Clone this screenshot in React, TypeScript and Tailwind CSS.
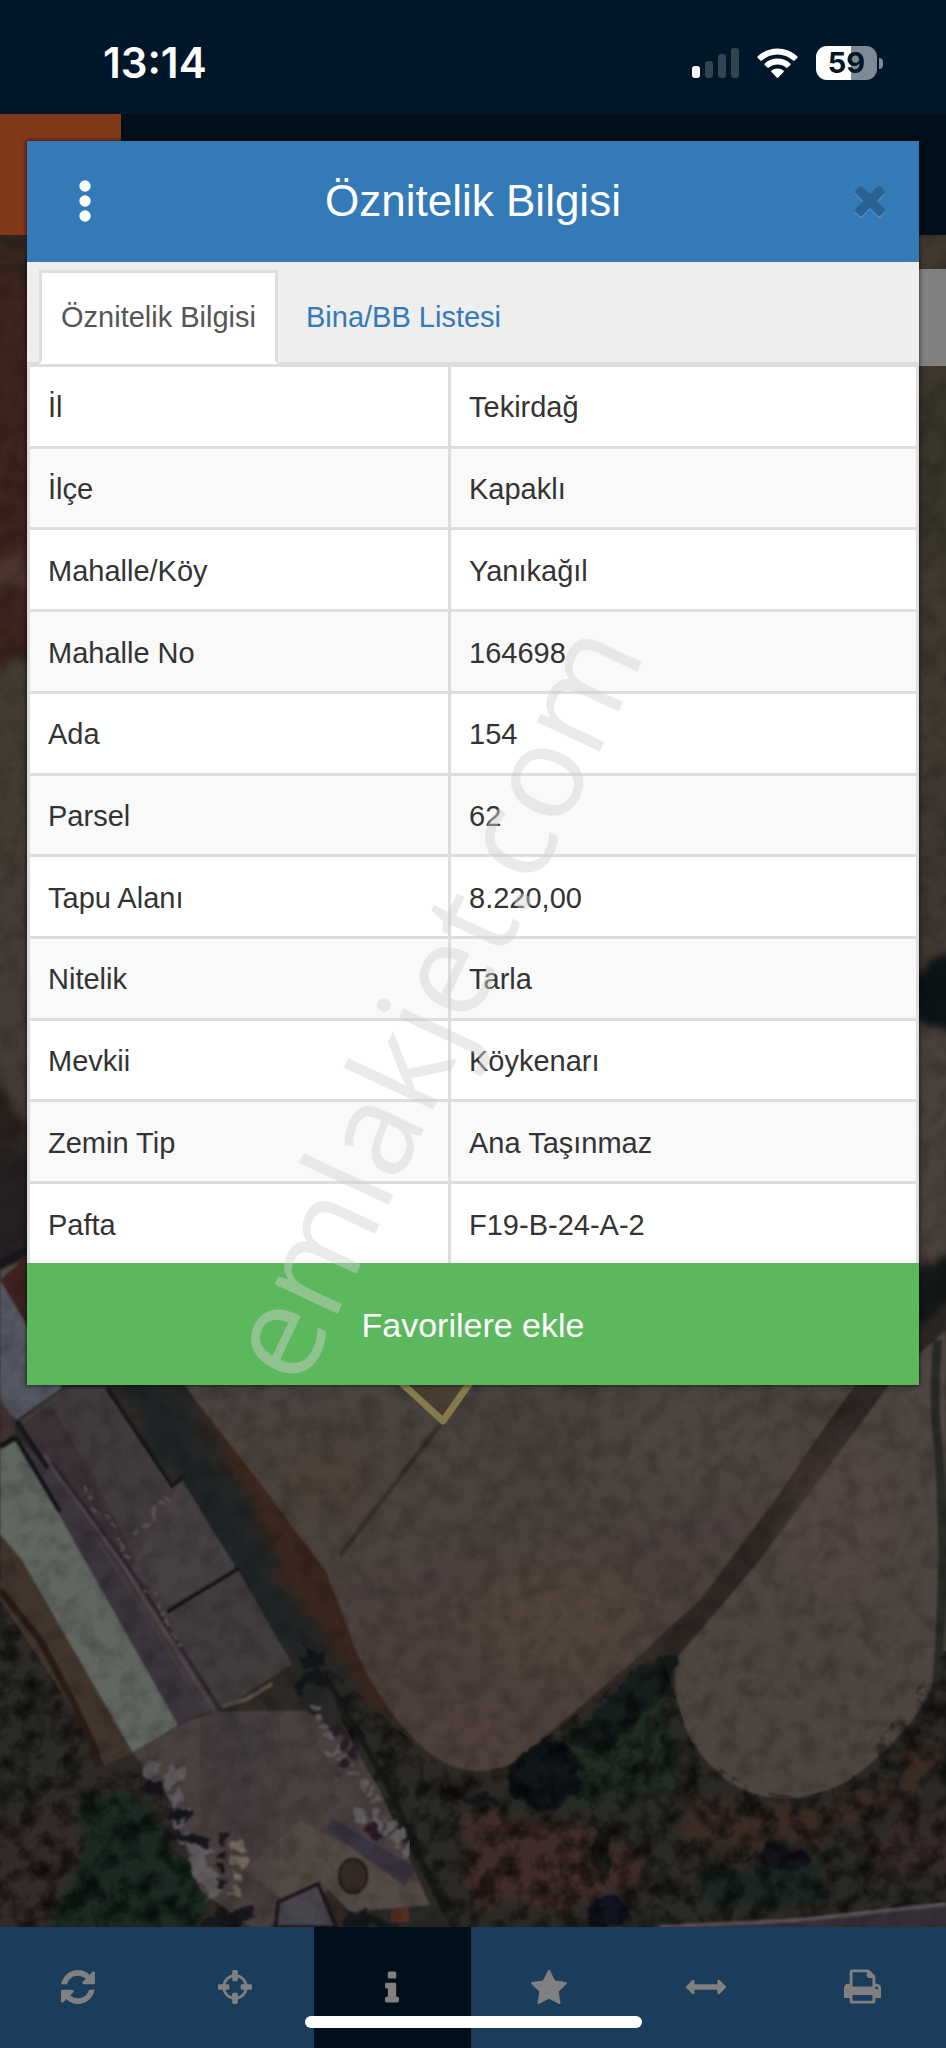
import {useState} from "react"

const rows = [
    {label: "İl", value: "Tekirdağ"},
    {label: "İlçe", value: "Kapaklı"},
    {label: "Mahalle/Köy", value: "Yanıkağıl"},
    {label: "Mahalle No", value: "164698"},
    {label: "Ada", value: "154"},
    {label: "Parsel", value: "62"},
    {label: "Tapu Alanı", value: "8.220,00"},
    {label: "Nitelik", value: "Tarla"},
    {label: "Mevkii", value: "Köykenarı"},
    {label: "Zemin Tip", value: "Ana Taşınmaz"},
    {label: "Pafta", value: "F19-B-24-A-2"},
]

const tools = [
    {
        name: "Yenile",
        viewBox: "0 128 1536 1536",
        size: "w-[34px] h-[34px]",
        path: "M1511 1056q0 5-1 7-64 268-268 434.500t-478 166.500q-146 0-282.500-55t-243.500-157l-129 129q-19 19-45 19t-45-19-19-45v-448q0-26 19-45t45-19h448q26 0 45 19t19 45-19 45l-137 137q71 66 161 102t187 36q134 0 250-65t186-179q11-17 53-117 8-23 30-23h192q13 0 22.500 9.500t9.500 22.500zM1536 256v448q0 26-19 45t-45 19h-448q-26 0-45-19t-19-45 19-45l138-138q-148-137-349-137-134 0-250 65t-186 179q-11 17-53 117-8 23-30 23h-199q-13 0-22.500-9.500t-9.500-22.500v-7q65-268 270-434.500t480-166.500q146 0 284 55.500t245 156.500l130-129q19-19 45-19t45 19 19 45z",
    },
    {
        name: "Konum",
        viewBox: "0 0 1536 1536",
        size: "w-[34px] h-[34px]",
        path: "M1197 896h-109q-26 0-45-19t-19-45v-128q0-26 19-45t45-19h109q-32-108-112.500-188.500t-188.500-112.500v109q0 26-19 45t-45 19h-128q-26 0-45-19t-19-45v-109q-108 32-188.500 112.500t-112.500 188.500h109q26 0 45 19t19 45v128q0 26-19 45t-45 19h-109q32 108 112.500 188.500t188.500 112.500v-109q0-26 19-45t45-19h128q26 0 45 19t19 45v109q108-32 188.500-112.500t112.500-188.500zM1536 704v128q0 26-19 45t-45 19h-143q-37 161-154.500 278.500t-278.500 154.500v143q0 26-19 45t-45 19h-128q-26 0-45-19t-19-45v-143q-161-37-278.500-154.500t-154.500-278.500h-143q-26 0-45-19t-19-45v-128q0-26 19-45t45-19h143q37-161 154.500-278.500t278.500-154.500v-143q0-26 19-45t45-19h128q26 0 45 19t19 45v143q161 37 278.500 154.500t154.500 278.500h143q26 0 45 19t19 45z",
    },
    {
        name: "Bilgi",
        viewBox: "0 64 640 1536",
        size: "w-[14px] h-[34px]",
        active: true,
        path: "M640 1344v128q0 26-19 45t-45 19h-512q-26 0-45-19t-19-45v-128q0-26 19-45t45-19h64v-384h-64q-26 0-45-19t-19-45v-128q0-26 19-45t45-19h384q26 0 45 19t19 45v576h64q26 0 45 19t19 45zM512 192v192q0 26-19 45t-45 19h-256q-26 0-45-19t-19-45v-192q0-26 19-45t45-19h256q26 0 45 19t19 45z",
    },
    {
        name: "Favoriler",
        viewBox: "0 0 1664 1664",
        size: "w-[36px] h-[36px]",
        path: "M1664 647q0 22-26 48l-363 354 86 500q1 7 1 20 0 21-10.500 35.500t-30.500 14.500q-19 0-40-12l-449-236-449 236q-22 12-40 12-21 0-31.500-14.500t-10.500-35.500q0-6 2-20l86-500-364-354q-25-27-25-48 0-37 56-46l502-73 225-455q19-41 49-41t49 41l225 455 502 73q56 9 56 46z",
    },
    {
        name: "Ölçüm",
        viewBox: "0 0 1792 1792",
        size: "w-[40px] h-[40px]",
        path: "M1792 896q0 26-19 45l-256 256q-19 19-45 19t-45-19-19-45v-128h-1024v128q0 26-19 45t-45 19-45-19l-256-256q-19-19-19-45t19-45l256-256q19-19 45-19t45 19 19 45v128h1024v-128q0-26 19-45t45-19 45 19l256 256q19 19 19 45z",
    },
    {
        name: "Yazdır",
        viewBox: "0 64 1664 1664",
        size: "w-[37px] h-[37px]",
        path: "M384 1536h896v-256h-896v256zM384 896h896v-384h-160q-40 0-68-28t-28-68v-160h-640v640zM1536 960q0-26-19-45t-45-19-45 19-19 45 19 45 45 19 45-19 19-45zM1664 960v416q0 13-9.500 22.500t-22.500 9.500h-224v160q0 40-28 68t-68 28h-960q-40 0-68-28t-28-68v-160h-224q-13 0-22.500-9.500t-9.500-22.500v-416q0-79 56.500-135.500t135.500-56.500h64v-544q0-40 28-68t68-28h672q40 0 88 20t76 48l152 152q28 28 48 76t20 88v256h64q79 0 135.500 56.500t56.500 135.500z",
    },
]

function StatusBar() {
    return (
        <div className="h-[114px] pt-[12px] pl-[103px] pr-[63px] bg-[#001629] flex items-center justify-between">
            <span className="font-['Inter',sans-serif] font-semibold text-[42px] leading-[48px] text-white">13:14</span>
            <div className="flex items-center">
                <svg viewBox="0 0 47 31" className="w-[47px] h-[31px]">
                    <rect x="0" y="18" width="8" height="12" rx="3" fill="#fff"/>
                    <rect x="13" y="13" width="8" height="17" rx="3" fill="#33444f"/>
                    <rect x="26" y="6" width="8" height="24" rx="3" fill="#33444f"/>
                    <rect x="39" y="0" width="8" height="30" rx="3" fill="#33444f"/>
                </svg>
                <svg viewBox="0 0 41 31" className="w-[41px] h-[31px] ml-[18px]" fill="#fff">
                    <path d="M20.500 0.500C28 0.500 35 3.300 40.200 8.300Q41 9.200 40.200 10L37.600 12.500Q36.800 13.200 36 12.500C31.800 8.700 26.300 6.500 20.500 6.500C14.700 6.500 9.200 8.700 5 12.500Q4.200 13.200 3.400 12.500L0.800 10Q0 9.200 0.800 8.300C6 3.300 13 0.500 20.500 0.500Z"/>
                    <path d="M20.500 10.500C25.400 10.500 29.900 12.300 33.300 15.400Q34.100 16.200 33.300 17L30.600 19.500Q29.900 20.200 29.100 19.500C26.700 17.500 23.800 16.400 20.500 16.400C17.200 16.400 14.300 17.500 11.900 19.500Q11.100 20.200 10.400 19.500L7.700 17Q6.900 16.200 7.700 15.400C11.100 12.300 15.600 10.500 20.500 10.500Z"/>
                    <path d="M20.500 20.500C22.800 20.500 24.900 21.200 26.500 22.500Q27.300 23.200 26.500 24L21.300 29.500Q20.500 30.300 19.700 29.500L14.500 24Q13.700 23.200 14.500 22.500C16.100 21.200 18.200 20.500 20.500 20.500Z"/>
                </svg>
                <div
                    className="ml-[18px] w-[61px] h-[34px] rounded-[11px] bg-linear-to-r from-white from-58% to-[#7f8b94] to-58% flex items-center justify-center font-['Inter',sans-serif] font-bold text-[29px] leading-[34px] text-[#001629]"
                >
                    59
                </div>
                <div className="ml-[2px] w-[4px] h-[11px] rounded-r-full bg-[#7f8b94]"></div>
            </div>
        </div>
    )
}

function SatelliteMap() {
    return (
        <svg
            viewBox="0 235 946 1692"
            preserveAspectRatio="xMidYMid slice"
            className="absolute inset-0 w-full h-full"
            aria-hidden="true"
        >
            <defs>
                <filter id="rough" x="0" y="0" width="100%" height="100%" colorInterpolationFilters="sRGB">
                    <feTurbulence type="fractalNoise" baseFrequency="0.05" numOctaves="4" seed="4" result="n"/>
                    <feDisplacementMap in="SourceGraphic" in2="n" scale="22" xChannelSelector="R" yChannelSelector="G" result="d"/>
                    <feGaussianBlur in="d" stdDeviation="1"/>
                </filter>
                <filter id="ground" x="0" y="0" width="100%" height="100%" colorInterpolationFilters="sRGB">
                    <feTurbulence type="fractalNoise" baseFrequency="0.03" numOctaves="4" seed="7" result="n"/>
                    <feDisplacementMap in="SourceGraphic" in2="n" scale="40" xChannelSelector="R" yChannelSelector="G" result="d"/>
                    <feGaussianBlur in="d" stdDeviation="4"/>
                </filter>
                <filter id="soft" x="-30%" y="-30%" width="160%" height="160%">
                    <feGaussianBlur stdDeviation="16"/>
                </filter>
                <filter id="edge" x="-5%" y="-5%" width="110%" height="110%">
                    <feGaussianBlur stdDeviation="1"/>
                </filter>
                <filter id="grain" x="0" y="0" width="100%" height="100%" colorInterpolationFilters="sRGB">
                    <feTurbulence type="fractalNoise" baseFrequency="0.05" numOctaves="4" seed="9"/>
                    <feColorMatrix values="0 0 0 0 0  0 0 0 0 0  0 0 0 0 0  2 0 0 0 -0.800"/>
                </filter>
                <linearGradient id="field" x1="0" y1="0" x2="0.300" y2="1">
                    <stop offset="0" stopColor="#4a4240"/>
                    <stop offset="0.500" stopColor="#4b423c"/>
                    <stop offset="1" stopColor="#4d403b"/>
                </linearGradient>
                <clipPath id="vegetation">
                    <path d="M0 1540L110 1765L160 1780L250 1927H0ZM300 1640L410 1740Q450 1785 510 1765L660 1650L690 1740Q770 1825 850 1780L946 1650V1927H450Z"/>
                </clipPath>
            </defs>

            <rect x="0" y="235" width="946" height="1692" fill="#2e2926"/>

            {/* strips on both sides of the dialog */}
            <g filter="url(#ground)">
                <path d="M-30 200H80V650L-30 670Z" fill="#3d241d"/>
                <path d="M-30 200H80V300L-30 250Z" fill="#35261f"/>
                <path d="M-30 560H80V590H-30Z" fill="#4a342b"/>
                <path d="M-30 675L80 650V860H-30Z" fill="#443c33"/>
                <path d="M-30 860H80V1130L-30 1120Z" fill="#463c37"/>
                <path d="M-30 1040L30 1130L-30 1160Z" fill="#291f1c"/>
                <path d="M-30 1160L80 1150V1260L-30 1280Z" fill="#262120"/>
                <path d="M880 200H980V1000H880Z" fill="#413930"/>
                <path d="M880 380H980V560H880Z" fill="#38352a"/>
                <path d="M880 760H980V960H880Z" fill="#3e3732"/>
                <path d="M880 1000H980V1260L880 1330Z" fill="#4a403c"/>
                <path d="M880 985L980 940V1040L880 1000Z" fill="#0d1417"/>
                <path d="M880 1310L980 1220V1285L880 1350Z" fill="#141818"/>
            </g>

            {/* ground around the fields */}
            <g filter="url(#ground)">
                <path d="M-20 1560L60 1690L100 1770L60 1860L-20 1940Z" fill="#2c2a27"/>
                <path d="M-20 1840L60 1790L90 1800L60 1940H-20Z" fill="#342b29"/>
                <path d="M90 1800L130 1790L210 1900L210 1940H50Z" fill="#1b2a22"/>
                <path d="M100 1340L190 1340L350 1600L440 1760L480 1940H380L290 1660Z" fill="#272826"/>
                <path d="M190 1400L240 1440L340 1570L420 1740L380 1720L290 1590Z" fill="#39261f"/>
                <path d="M110 1360L150 1375L290 1600L310 1650L270 1640Z" fill="#1f2526"/>
                <path d="M330 1700L500 1790L680 1650L740 1800L960 1740V1940H430Z" fill="#2b2925"/>
                <path d="M455 1815L570 1815L650 1870L610 1900L480 1910Z" fill="#402c28"/>
                <path d="M690 1800L830 1810L900 1770L940 1740L920 1790L780 1850L690 1840Z" fill="#3c2b25"/>
                <path d="M870 1840L960 1800V1870L880 1880Z" fill="#36292a"/>
                <path d="M540 1770L660 1675L680 1790L570 1800Z" fill="#212d23"/>
                <path d="M700 1880L830 1850L830 1900L720 1910Z" fill="#1a2521"/>
            </g>

            {/* ploughed fields */}
            <g filter="url(#edge)">
                <path d="M180 1380L250 1470L325 1570L345 1620Q365 1685 410 1735Q455 1785 510 1765Q560 1725 640 1655L700 1600L880 1360H180Z" fill="url(#field)"/>
                <path d="M900 1370L946 1330V1650Q930 1720 850 1780Q775 1820 720 1775Q670 1730 675 1660L760 1560Z" fill="#4d4441"/>
                <path d="M938 1340Q932 1400 938 1440Q948 1560 936 1690" stroke="#2b2b26" strokeWidth="9" fill="none"/>
                <path d="M868 1380Q800 1470 760 1540L672 1650" stroke="#2f2622" strokeWidth="14" fill="none"/>
                <path d="M440 1425L340 1555" stroke="#382f2c" strokeWidth="5" fill="none"/>
            </g>
            <g filter="url(#soft)" opacity="0.450">
                <ellipse cx="560" cy="1620" rx="90" ry="60" fill="#5a483d"/>
                <ellipse cx="470" cy="1720" rx="50" ry="35" fill="#57433f"/>
                <ellipse cx="330" cy="1480" rx="60" ry="40" fill="#4f3f34"/>
                <ellipse cx="700" cy="1440" rx="90" ry="50" fill="#524844"/>
                <ellipse cx="840" cy="1520" rx="60" ry="80" fill="#5b4a45"/>
                <ellipse cx="540" cy="1470" rx="50" ry="90" fill="#463f36"/>
                <ellipse cx="790" cy="1720" rx="60" ry="40" fill="#4c4742"/>
            </g>

            {/* tree line */}
            <g filter="url(#rough)">
                <path d="M560 1745L650 1660L680 1655L665 1690L600 1755Z" fill="#161e1d"/>
                <ellipse cx="546" cy="1776" rx="34" ry="35" fill="#11161a"/>
                <path d="M440 1785L500 1800L480 1806L440 1792Z" fill="#151719"/>
                <path d="M648 1715L658 1715L650 1790L642 1790Z" fill="#191e1a"/>
                <ellipse cx="788" cy="1858" rx="26" ry="14" fill="#13151b"/>
                <ellipse cx="608" cy="1914" rx="23" ry="17" fill="#11131e"/>
                <path d="M592 1825L612 1825L608 1885L598 1880Z" fill="#1b1a17"/>
                <path d="M680 1872L770 1858" stroke="#211918" strokeWidth="4"/>
                <path d="M60 1910L100 1890" stroke="#101a16" strokeWidth="12"/>
            </g>

            <g clipPath="url(#vegetation)">
                <rect x="0" y="1500" width="946" height="427" filter="url(#grain)" opacity="0.700"/>
            </g>

            {/* yards, sheds and warehouse roofs */}
            <g filter="url(#edge)">
                <path d="M0 1530L22 1560L133 1753L105 1765L60 1690L0 1600Z" fill="#42352e"/>
                <path d="M0 1590L40 1640L72 1700L98 1755" stroke="#2c1d18" strokeWidth="7" fill="none"/>
                <path d="M0 1270L27 1258V1375L12 1420L0 1400Z" fill="#53504f"/>
                <path d="M0 1280L27 1255V1325Z" fill="#3c2420"/>
                <path d="M0 1283L60 1380L62 1388L16 1420L0 1390Z" fill="#555963"/>
                <path d="M0 1400L15 1420L14 1438L0 1446Z" fill="#403330"/>
                <path d="M20 1420L65 1388H105L172 1485L182 1482L230 1560L290 1665L215 1712L180 1715Z" fill="#423a3c"/>
                <path d="M22 1425L50 1405L90 1470L130 1550L150 1590L140 1600Z" fill="#3a3036"/>
                <path d="M182 1480L235 1566L170 1605L130 1570Z" fill="#474143"/>
                <path d="M170 1610L238 1570L292 1664L218 1712Z" fill="#433e3c"/>
                <path d="M0 1447L16 1438L178 1725L133 1753L22 1560L0 1534Z" fill="#606661"/>
                <path d="M16 1438L178 1725L205 1712L46 1462Z" fill="#3b353c"/>
                <path d="M44 1455L120 1560L215 1712" stroke="#51464d" strokeWidth="4" fill="none"/>
                <path d="M52 1462L128 1566L222 1712" stroke="#2f252d" strokeWidth="4" fill="none"/>
                <path d="M17 1422L48 1468M16 1438L60 1512" stroke="#19171b" strokeWidth="5" fill="none"/>
                <path d="M107 1388L172 1486L184 1477M167 1612L238 1569" stroke="#141419" strokeWidth="4" fill="none"/>
                <path d="M0 1447L16 1437M0 1263L27 1250" stroke="#15131a" strokeWidth="6" fill="none"/>
                <path d="M132 1752L185 1722L215 1712L305 1710L350 1740L380 1790L430 1905L350 1912L330 1890L280 1912L270 1927H250L200 1890L170 1800Z" fill="#494041"/>
                <path d="M245 1870L300 1820L420 1885L430 1905L350 1912L320 1880L285 1900Z" fill="#534a45"/>
                <path d="M278 1902L318 1884L336 1927H276Z" fill="#4a454d" stroke="#1a161b" strokeWidth="4"/>
                <path d="M332 1818L415 1868L405 1886L327 1830Z" fill="#383440"/>
                <ellipse cx="353" cy="1876" rx="14" ry="17" fill="#342b26" stroke="#231d1a" strokeWidth="3"/>
                <path d="M392 1908H409V1922H390Z" fill="#512f28"/>
                <path d="M325 1675L390 1790L445 1912" stroke="#121517" strokeWidth="5" fill="none"/>
                <path d="M222 1706L245 1700L272 1684" stroke="#5d544a" strokeWidth="4" fill="none"/>
            </g>
            <g filter="url(#soft)" opacity="0.700">
                <path d="M215 1730L245 1820L265 1890" stroke="#3a3135" strokeWidth="22" fill="none"/>
                <path d="M225 1712L250 1760" stroke="#3a373d" strokeWidth="30" fill="none"/>
            </g>

            {/* rubble and parked vehicles along the yard */}
            <g filter="url(#rough)">
                <path d="M83 1485L100 1510L118 1540L135 1565M135 1532L170 1495M150 1590L165 1615L180 1650" stroke="#5f5456" strokeWidth="4" strokeDasharray="7 5" fill="none"/>
                <path d="M145 1768L175 1780L183 1835L210 1855" stroke="#5e5a5e" strokeWidth="16" strokeDasharray="14 7" fill="none"/>
                <path d="M192 1855L217 1895" stroke="#635d60" strokeWidth="18" fill="none"/>
                <path d="M240 1840L237 1895" stroke="#75695f" strokeWidth="12" strokeDasharray="9 7" fill="none"/>
                <path d="M223 1835L221 1895" stroke="#1d1518" strokeWidth="8" strokeDasharray="8 7" fill="none"/>
                <path d="M145 1790L163 1785M170 1810L190 1820M175 1835L205 1840" stroke="#16171c" strokeWidth="9" fill="none"/>
                <path d="M315 1705L330 1750M330 1735L355 1775L380 1805" stroke="#615a5c" strokeWidth="12" strokeDasharray="5 6" fill="none"/>
                <path d="M330 1730L355 1750L340 1775" stroke="#292027" strokeWidth="9" strokeDasharray="9 6" fill="none"/>
                <path d="M355 1815L390 1825L410 1855" stroke="#646063" strokeWidth="17" strokeDasharray="10 5" fill="none"/>
                <path d="M365 1827L380 1837" stroke="#2a1826" strokeWidth="13" fill="none"/>
                <path d="M300 1665L325 1660M295 1690L320 1675" stroke="#12171a" strokeWidth="14" fill="none"/>
                <path d="M205 1925L255 1915M345 1920L395 1927" stroke="#15171a" strokeWidth="13" fill="none"/>
            </g>

            {/* road */}
            <path d="M700 1927L860 1915L946 1903V1927Z" fill="#353035"/>
            <path d="M660 1927L800 1920L946 1904" stroke="#5a5258" strokeWidth="4" fill="none" filter="url(#edge)"/>

            <rect x="0" y="235" width="946" height="1692" filter="url(#grain)" opacity="0.200"/>

            {/* selected parcel */}
            <path d="M395 1377L443 1421L486 1360L440 1340Z" fill="#4a3b26" fillOpacity="0.500" stroke="#857a4c" strokeWidth="7" strokeLinejoin="round"/>
        </svg>
    )
}

export default function App() {
    const [activeTab, setActiveTab] = useState<number>(0)

    const tabClasses = "h-[94px] px-[19px] border-3 text-[29px] leading-[40px]"
    const activeTabClasses = "bg-white border-[#ddd] border-b-white text-[#555]"
    const idleTabClasses = "border-transparent text-[#337ab7]"
    const cellClasses = "px-[18px] pt-[2px] border-3 border-[#ddd] align-middle text-left font-normal"

    return (
        <div className="relative min-h-screen flex flex-col overflow-hidden bg-[#302a26] font-['Liberation_Sans',Arial,sans-serif] text-[#333]">
            <StatusBar/>

            <div className="h-[121px] bg-[#000f1a] flex">
                <div className="w-[121px] bg-[#80391b]"></div>
            </div>

            <main className="relative flex-1 pt-[34px]">
                <SatelliteMap/>
                <div className="relative ml-auto w-1/3 h-[97px] bg-[#808080]"></div>
            </main>

            <nav className="h-[121px] pr-[4px] bg-[#1a3d5c] grid grid-cols-6">
                {tools.map((tool) => (
                    <button
                        key={tool.name}
                        type="button"
                        aria-label={tool.name}
                        className={"pb-[2px] pr-[2px] flex items-center justify-center text-[#808080] " + (tool.active ? "bg-[#000f1a]" : "")}
                    >
                        <svg viewBox={tool.viewBox} className={tool.size} fill="currentColor">
                            <path d={tool.path}/>
                        </svg>
                    </button>
                ))}
            </nav>

            {/* HOME INDICATOR */}
            <div className="absolute bottom-[20px] inset-x-0 flex justify-center">
                <div className="w-[337px] h-[12px] rounded-full bg-white"></div>
            </div>

            {/* DIALOG */}
            <section
                role="dialog"
                aria-label="Öznitelik Bilgisi"
                className="absolute top-[141px] inset-x-[27px] bg-white shadow-[0_0_4px_1px_rgba(0,0,0,0.5)]"
            >
                <header className="h-[121px] pb-[2px] pl-[52px] pr-[34px] bg-[#337ab7] flex items-center justify-between">
                    <button type="button" aria-label="Menü" className="w-[12px]">
                        <svg viewBox="0 0 12 42" className="w-[12px] h-[42px]" fill="#fff">
                            <circle cx="6" cy="6" r="5.700"/>
                            <circle cx="6" cy="21" r="5.700"/>
                            <circle cx="6" cy="36" r="5.700"/>
                        </svg>
                    </button>
                    <h1 className="text-[44px] leading-[52px] text-white">Öznitelik Bilgisi</h1>
                    <button type="button" aria-label="Kapat" className="w-[30px]">
                        <svg viewBox="110 366 1188 1188" className="w-[30px] h-[30px] drop-shadow-[0_2px_0_#4b8ec6]" fill="#296292">
                            <path d="M1298 1322q0 40-28 68l-136 136q-28 28-68 28t-68-28l-294-294-294 294q-28 28-68 28t-68-28l-136-136q-28-28-28-68t28-68l294-294-294-294q-28-28-28-68t28-68l136-136q28-28 68-28t68 28l294 294 294-294q28-28 68-28t68 28l136 136q28 28 28 68t-28 68l-294 294 294 294q28 28 28 68z"/>
                        </svg>
                    </button>
                </header>

                <div role="tablist" className="h-[103px] pt-[8px] pl-[12px] bg-[#eee] border-b-3 border-[#ddd] flex gap-[6px]">
                    {["Öznitelik Bilgisi", "Bina/BB Listesi"].map((tab, i) => (
                        <button
                            key={tab}
                            type="button"
                            role="tab"
                            aria-selected={activeTab === i}
                            onClick={() => setActiveTab(i)}
                            className={tabClasses + " " + (activeTab === i ? activeTabClasses : idleTabClasses)}
                        >
                            {tab}
                        </button>
                    ))}
                </div>

                <table className="w-full h-[902px] -mt-[1px] table-fixed border-collapse text-[29px] leading-[40px]">
                    <colgroup>
                        <col className="w-[421px]"/>
                        <col/>
                    </colgroup>
                    <tbody>
                        {rows.map((row) => (
                            <tr key={row.label} className="even:bg-[#f9f9f9]">
                                <th scope="row" className={cellClasses}>{row.label}</th>
                                <td className={cellClasses}>{row.value}</td>
                            </tr>
                        ))}
                    </tbody>
                </table>

                <button type="button" className="relative block w-full h-[122px] -mt-[3px] pt-[2px] bg-[#5cb85c] text-[34px] leading-[40px] text-white">
                    Favorilere ekle
                </button>
            </section>

            {/* WATERMARK */}
            <div className="pointer-events-none absolute top-[600px] inset-x-0 h-[800px] pr-[88px] flex items-center justify-center">
                <span className="-rotate-65 font-['Open_Sans',sans-serif] text-[130px] leading-[160px] text-[#d0d0d0]/45">
                    emlakjet.com
                </span>
            </div>
        </div>
    )
}
